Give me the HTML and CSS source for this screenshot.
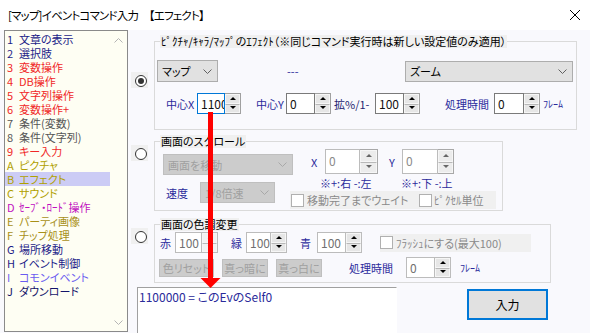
FILE: index.html
```html
<!DOCTYPE html>
<html lang="ja">
<head>
<meta charset="utf-8">
<title>イベントコマンド入力</title>
<link rel="stylesheet" href="styles.css">
</head>
<body>
<div class="window">
  <div class="titlebar">
    <span class="title">[マップ]イベントコマンド入力　【エフェクト】</span>
    <svg class="close" width="12" height="12" viewBox="0 0 12 12"><path d="M1 1L11 11M11 1L1 11" stroke="#000" stroke-width="1" fill="none"/></svg>
  </div>
  <div class="main">
    <div class="list">
      <ul class="items">
        <li class="navy"><span class="k">1</span>文章の表示</li>
        <li class="navy"><span class="k">2</span>選択肢</li>
        <li class="red"><span class="k">3</span>変数操作</li>
        <li class="red"><span class="k">4</span>DB操作</li>
        <li class="red"><span class="k">5</span>文字列操作</li>
        <li class="red"><span class="k">6</span>変数操作+</li>
        <li class="grey"><span class="k">7</span>条件(変数)</li>
        <li class="grey"><span class="k">8</span>条件(文字列)</li>
        <li class="red"><span class="k">9</span>キー入力</li>
        <li class="olive"><span class="k">A</span>ピクチャ</li>
        <li class="olive sel"><span class="k">B</span>エフェクト</li>
        <li class="olive"><span class="k">C</span>サウンド</li>
        <li class="mag"><span class="k">D</span>ｾｰﾌﾞ・ﾛｰﾄﾞ操作</li>
        <li class="ochre"><span class="k">E</span>パーティ画像</li>
        <li class="ochre"><span class="k">F</span>チップ処理</li>
        <li class="navy"><span class="k">G</span>場所移動</li>
        <li class="navy"><span class="k">H</span>イベント制御</li>
        <li class="lav"><span class="k">I</span>コモンイベント</li>
        <li class="dark"><span class="k">J</span>ダウンロード</li>
      </ul>
      <div class="scroll">
        <svg width="9" height="5" viewBox="0 0 9 5"><path d="M0.5 4.5L4.5 0.5L8.5 4.5" fill="none" stroke="#b4b4b4"/></svg>
        <svg width="9" height="5" viewBox="0 0 9 5"><path d="M0.5 0.5L4.5 4.5L8.5 0.5" fill="none" stroke="#b4b4b4"/></svg>
      </div>
    </div>

    <div class="panel">
      <div class="sec sec1">
        <div class="rcell"><span class="rbg"><span class="radio on"></span></span></div>
        <div class="group g1">
          <span class="legend">ﾋﾟｸﾁｬ/ｷｬﾗ/ﾏｯﾌﾟのｴﾌｪｸﾄ（※同じコマンド実行時は新しい設定値のみ適用）</span>
          <div class="row rowA">
            <div class="dd s-map"><span>マップ</span><svg width="9" height="5" viewBox="0 0 9 5"><path d="M0.5 0.5L4.5 4.5L8.5 0.5" fill="none" stroke="#606060"/></svg></div>
            <span class="dash">---</span>
            <div class="dd s-zoom"><span>ズーム</span><svg width="9" height="5" viewBox="0 0 9 5"><path d="M0.5 0.5L4.5 4.5L8.5 0.5" fill="none" stroke="#606060"/></svg></div>
          </div>
          <div class="row rowB">
            <span class="lbl l-cx">中心X</span>
            <span class="spin sp-cx"><span class="sv focus">1100</span><span class="sb"><i class="up"></i><i class="dn"></i></span></span>
            <span class="lbl l-cy">中心Y</span>
            <span class="spin sp-cy"><span class="sv">0</span><span class="sb"><i class="up"></i><i class="dn"></i></span></span>
            <span class="lbl l-zm">拡%/1-</span>
            <span class="spin sp-zm"><span class="sv">100</span><span class="sb"><i class="up"></i><i class="dn"></i></span></span>
            <span class="lbl l-t1">処理時間</span>
            <span class="spin sp-t1"><span class="sv">0</span><span class="sb"><i class="up"></i><i class="dn"></i></span></span>
            <span class="lbl small l-f1">ﾌﾚｰﾑ</span>
          </div>
        </div>
      </div>

      <div class="sec sec2">
        <div class="rcell"><span class="rbg"><span class="radio"></span></span></div>
        <div class="group g2">
          <span class="legend">画面のスクロール</span>
          <div class="lcol">
            <div class="dd dis s-move"><span>画面を移動</span><svg width="9" height="5" viewBox="0 0 9 5"><path d="M0.5 0.5L4.5 4.5L8.5 0.5" fill="none" stroke="#a8a8a8"/></svg></div>
            <div class="row speed">
              <span class="lbl l-sp">速度</span>
              <div class="dd dis s-speed"><span>1/8倍速</span><svg width="9" height="5" viewBox="0 0 9 5"><path d="M0.5 0.5L4.5 4.5L8.5 0.5" fill="none" stroke="#a8a8a8"/></svg></div>
            </div>
          </div>
          <div class="rcol">
            <div class="row xyrow">
              <span class="lbl l-x">X</span>
              <span class="spin dis tall sp-x"><span class="sv">0</span><span class="sb"><i class="up"></i><i class="dn"></i></span></span>
              <span class="lbl l-y">Y</span>
              <span class="spin dis tall sp-y"><span class="sv">0</span><span class="sb"><i class="up"></i><i class="dn"></i></span></span>
            </div>
            <div class="row notes">
              <span class="lbl n1">※+:右 -:左</span>
              <span class="lbl n2">※+:下 -:上</span>
            </div>
            <div class="chkrow">
              <span class="cb c1"></span><span class="clbl cl1">移動完了までウェイト</span>
              <span class="cb"></span><span class="clbl cl2">ﾋﾟｸｾﾙ単位</span>
            </div>
          </div>
        </div>
      </div>

      <div class="sec sec3">
        <div class="rcell"><span class="rbg"><span class="radio"></span></span></div>
        <div class="group g3">
          <span class="legend">画面の色調変更</span>
          <div class="row row1">
            <span class="lbl l-r">赤</span>
            <span class="spin grey3 faint sp-r"><span class="sv">100</span><span class="sb"><i class="up"></i><i class="dn"></i></span></span>
            <span class="lbl l-g">緑</span>
            <span class="spin grey3 sp-g"><span class="sv">100</span><span class="sb"><i class="up"></i><i class="dn"></i></span></span>
            <span class="lbl l-b">青</span>
            <span class="spin grey3 sp-b"><span class="sv">100</span><span class="sb"><i class="up"></i><i class="dn"></i></span></span>
            <div class="chk3"><span class="cb"></span><span class="clbl cl3">ﾌﾗｯｼｭにする(最大100)</span></div>
          </div>
          <div class="row row2">
            <span class="btn-d b1">色リセット</span>
            <span class="btn-d b2">真っ暗に</span>
            <span class="btn-d b3">真っ白に</span>
            <span class="lbl l-t3">処理時間</span>
            <span class="spin grey3 sp-t3"><span class="sv">0</span><span class="sb"><i class="up"></i><i class="dn"></i></span></span>
            <span class="lbl small l-f3">ﾌﾚｰﾑ</span>
          </div>
        </div>
      </div>

      <div class="bottom">
        <div class="ta">1100000 = このEvのSelf0</div>
        <button class="ok">入力</button>
      </div>
    </div>
  </div>

  <svg class="arrow" width="22" height="178" viewBox="0 0 22 178">
    <rect x="8" y="0" width="5" height="167" fill="#ff0000"/>
    <polygon points="0.5,166 20.5,166 10.5,176" fill="#ff0000"/>
  </svg>
</div>
</body>
</html>
```

FILE: styles.css
```css
* { box-sizing: border-box; }
html, body { margin: 0; padding: 0; }
body {
  width: 590px;
  height: 333px;
  overflow: hidden;
  background: #f9f9fd;
  font-family: "Noto Sans CJK JP", "Noto Sans", sans-serif;
  font-size: 11px;
  line-height: 14px;
  font-feature-settings: "palt";
  color: #000;
}
.window { position: relative; width: 590px; height: 333px; }

/* title bar */
.titlebar {
  height: 30px;
  background: #fff;
  display: flex;
  align-items: center;
  padding: 0 9px 0 8px;
}
.title { font-size: 11.5px; letter-spacing: -0.8px; color: #000; }
.close { margin-left: auto; }

.main { display: flex; align-items: flex-start; }

/* command list */
.list {
  margin-left: 4px;
  width: 124px;
  height: 302px;
  border: 1px solid #8a8a8a;
  background: #fefef3;
  display: flex;
}
.items { list-style: none; margin: 0; padding: 1px 0 0; flex: 1; }
.items li { height: 14px; line-height: 14px; padding-left: 2px; white-space: nowrap; }
.items .k { display: inline-block; width: 12px; }
.items .sel { background: #ccccf5; }
.navy { color: #1c1c88; }
.red { color: #f02828; }
.grey { color: #555; }
.olive { color: #b0a000; }
.ochre { color: #a89018; }
.mag { color: #c010c0; }
.lav { color: #6a5cf0; }
.dark { color: #14146a; }
.scroll {
  width: 17px;
  display: flex;
  flex-direction: column;
  justify-content: space-between;
  align-items: center;
  padding: 7px 0 6px;
}

/* right panel */
.panel { flex: 1; display: flex; flex-direction: column; }
.sec { display: flex; }
.rcell { width: 26px; }
.rbg {
  display: block;
  margin-left: 3px;
  width: 17px;
  height: 16px;
  background: #f0f0f0;
  padding: 3px 0 0 4px;
}
.radio {
  display: block;
  width: 12px;
  height: 12px;
  border: 1px solid #333;
  border-radius: 50%;
  background: #fff;
  position: relative;
}
.radio.on::after {
  content: "";
  position: absolute;
  left: 2px;
  top: 2px;
  width: 6px;
  height: 6px;
  border-radius: 50%;
  background: #333;
}
.sec1 { margin-top: 11px; }
.sec1 .rbg { margin-top: 31px; }
.sec2 { margin-top: 11px; }
.sec2 .rbg { margin-top: 4px; }
.sec3 { margin-top: 13px; }
.sec3 .rbg { margin-top: 4px; }

.group { position: relative; border: 1px solid #dadada; }
.legend {
  position: absolute;
  top: -7px;
  left: 5px;
  height: 13px;
  line-height: 13px;
  padding: 0 1px;
  background: #f0f0f0;
  color: #000;
  white-space: nowrap;
}
.g1 { width: 423px; height: 89px; padding-top: 18px; }
.g2 { width: 349px; height: 70px; display: flex; }
.g3 { width: 397px; height: 59px; padding-top: 7px; }
.row { display: flex; align-items: center; }
.lbl { color: #2b2b9c; white-space: nowrap; display: inline-block; }
.small { font-size: 10px; }

/* dropdowns */
.dd {
  display: flex;
  align-items: center;
  justify-content: space-between;
  background: #e1e1e1;
  border: 1px solid #adadad;
  padding: 0 5px 0 4px;
  color: #000;
  white-space: nowrap;
}
.dd.dis { background: #cccccc; border-color: #bfbfbf; color: #a0a0a0; }
.rowA { height: 22px; padding-right: 3px; }
.s-map { margin-left: 2px; width: 61px; height: 22px; }
.dash { margin-left: 69px; color: #2b2b9c; }
.s-zoom { margin-left: auto; width: 168px; height: 21px; }

/* spin boxes */
.spin { display: flex; height: 21px; }
.sv {
  flex: 1;
  background: #fff;
  border: 1px solid #7a7a7a;
  padding-left: 3px;
  font-size: 12px;
  line-height: 19px;
  overflow: hidden;
  white-space: nowrap;
  color: #111;
}
.sv.focus { border-color: #0078d7; }
.sb {
  width: 16px;
  display: flex;
  flex-direction: column;
  border: 1px solid #a0a0a0;
  border-left: none;
  background: #e6e6e6;
}
.sb i { flex: 1; position: relative; border: 1px solid #f6f6f6; }
.sb i + i { border-top-color: #b8b8b8; }
.sb i::before {
  content: "";
  position: absolute;
  left: 50%;
  top: 50%;
  margin: -2px 0 0 -3px;
  border-left: 3px solid transparent;
  border-right: 3px solid transparent;
}
.sb .up::before { border-bottom: 3px solid #000; }
.sb .dn::before { border-top: 3px solid #000; }
.spin.dis .sv { border-color: #bcbcbc; color: #8a8a8a; }
.spin.dis .sb { border-color: #a8a8a8; background: #ececec; }
.spin.dis .sb .up::before { border-bottom-color: #666; }
.spin.dis .sb .dn::before { border-top-color: #666; }
.spin.tall { height: 25px; }
.spin.tall .sv { line-height: 21px; }
.spin.grey3 .sv { border-color: #bcbcbc; color: #707070; }
.spin.grey3 .sb { border-color: #bcbcbc; }
.spin.faint .sb { background: #f2f2f2; }
.spin.faint .sb .up::before { border-bottom-color: #e0e0e0; }
.spin.faint .sb .dn::before { border-top-color: #e0e0e0; }

.rowB { margin-top: 11px; height: 21px; }
.l-cx { margin-left: 11px; width: 31px; }
.sp-cx { width: 44px; }
.l-cy { margin-left: 15px; width: 30px; }
.sp-cy { width: 45px; }
.l-zm { margin-left: 3px; width: 41px; color: #1e1e70; }
.sp-zm { width: 45px; }
.l-t1 { margin-left: 25px; width: 49px; }
.sp-t1 { width: 46px; }
.l-f1 { margin-left: 3px; }

/* scroll group */
.lcol { width: 135px; }
.s-move { margin: 12px 0 0 8px; width: 130px; height: 21px; }
.speed { margin-top: 7px; height: 21px; }
.l-sp { margin-left: 11px; width: 34px; }
.s-speed { width: 75px; height: 21px; }
.rcol { flex: 1; }
.xyrow { margin-top: 7px; height: 25px; }
.l-x { margin-left: 21px; width: 14px; }
.sp-x { width: 53px; }
.sp-x .sb { width: 18px; }
.l-y { margin-left: 11px; width: 13px; }
.sp-y { width: 52px; }
.notes { margin-top: 2px; height: 14px; }
.n1 { margin-left: 30px; width: 81px; }
.chkrow {
  margin-top: 1px;
  height: 18px;
  width: 206px;
  background: #f0f0f0;
  display: flex;
  align-items: center;
}
.cb {
  display: block;
  width: 13px;
  height: 13px;
  border: 1px solid #b0b0b0;
  background: #fff;
  flex: none;
}
.c1 { margin-left: 1px; }
.clbl { color: #8a8a8a; white-space: nowrap; }
.cl1 { margin-left: 3px; width: 112px; }
.cl2 { margin-left: 2px; }

/* colour group */
.row1 { height: 21px; }
.l-r { margin-left: 5px; width: 15px; }
.sp-r { width: 43px; }
.l-g { margin-left: 13px; width: 15px; }
.sp-g { width: 41px; }
.l-b { margin-left: 13px; width: 17px; }
.sp-b { width: 45px; }
.chk3 {
  margin-left: 18px;
  width: 151px;
  height: 18px;
  background: #f0f0f0;
  display: flex;
  align-items: center;
}
.cl3 { margin-left: 3px; }
.row2 { margin-top: 4px; height: 21px; }
.btn-d {
  height: 18px;
  background: #cccccc;
  border: 1px solid #bfbfbf;
  color: #a0a0a0;
  display: flex;
  align-items: center;
  justify-content: center;
  white-space: nowrap;
}
.b1 { margin-left: 4px; width: 55px; }
.b2 { margin-left: 8px; width: 46px; }
.b3 { margin-left: 8px; width: 46px; }
.l-t3 { margin-left: 27px; width: 57px; }
.sp-t3 { width: 45px; }
.l-f3 { margin-left: 9px; }

/* bottom */
.bottom { display: flex; align-items: flex-start; margin-top: 4px; }
.ta {
  margin-left: 9px;
  width: 260px;
  height: 50px;
  background: #fff;
  border-top: 1px solid #a0a0a0;
  border-left: 1px solid #a0a0a0;
  border-right: 1px solid #fff;
  padding: 1px 0 0 1px;
  font-size: 12px;
  line-height: 15px;
  color: #2a2a9a;
  white-space: nowrap;
}
.ok {
  margin: 2px 0 0 70px;
  width: 81px;
  height: 31px;
  border: 2px solid #0078d7;
  background: #e1e1e1;
  font-family: inherit;
  font-size: 12px;
  color: #000;
  padding: 0;
}

/* annotation arrow overlay */
.arrow { position: absolute; left: 200px; top: 112px; }
```
